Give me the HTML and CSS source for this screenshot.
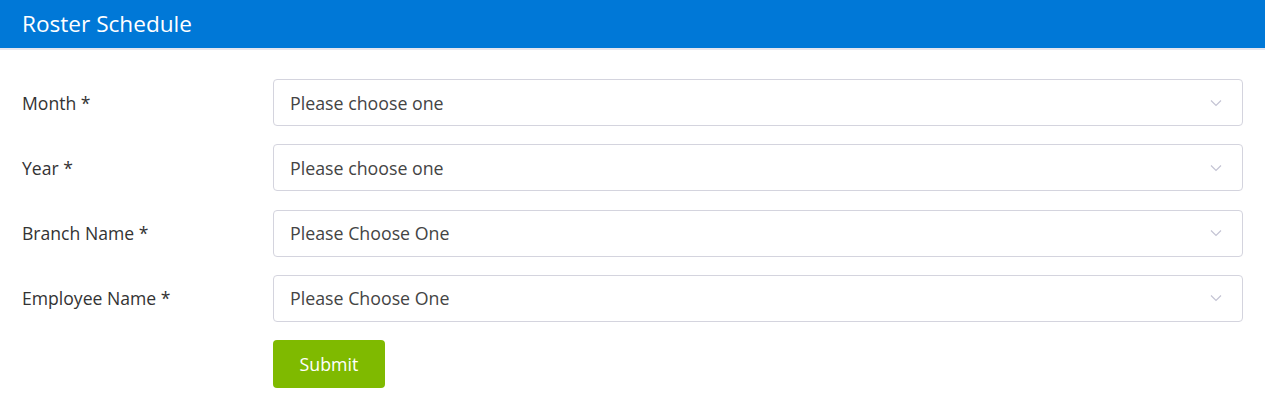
FILE: index.html
```html
<!DOCTYPE html>
<html>
<head>
<meta charset="utf-8">
<link rel="stylesheet" href="styles.css">
</head>
<body>
<header class="topbar"><h1 class="title">Roster Schedule</h1></header>
<form class="form">
  <div class="row">
    <label class="label">Month *</label>
    <div class="select"><span>Please choose one</span><svg class="chev" width="12" height="8" viewBox="0 0 12 8"><path d="M1 1.5 L6 6.5 L11 1.5" fill="none" stroke="#c4c4d4" stroke-width="1.2"/></svg></div>
  </div>
  <div class="row">
    <label class="label">Year *</label>
    <div class="select"><span>Please choose one</span><svg class="chev" width="12" height="8" viewBox="0 0 12 8"><path d="M1 1.5 L6 6.5 L11 1.5" fill="none" stroke="#c4c4d4" stroke-width="1.2"/></svg></div>
  </div>
  <div class="row">
    <label class="label">Branch Name *</label>
    <div class="select"><span>Please Choose One</span><svg class="chev" width="12" height="8" viewBox="0 0 12 8"><path d="M1 1.5 L6 6.5 L11 1.5" fill="none" stroke="#c4c4d4" stroke-width="1.2"/></svg></div>
  </div>
  <div class="row">
    <label class="label">Employee Name *</label>
    <div class="select"><span>Please Choose One</span><svg class="chev" width="12" height="8" viewBox="0 0 12 8"><path d="M1 1.5 L6 6.5 L11 1.5" fill="none" stroke="#c4c4d4" stroke-width="1.2"/></svg></div>
  </div>
  <div class="row">
    <span class="label"></span>
    <button type="button" class="submit">Submit</button>
  </div>
</form>
</body>
</html>
```
FILE: styles.css
```css
* { box-sizing: border-box; }
body {
  margin: 0;
  background: #fff;
  font-family: "Open Sans", "Noto Sans", sans-serif;
}
.topbar {
  height: 50px;
  background: #0078d7;
  border-bottom: 2px solid #e6e6ef;
  display: flex;
  align-items: center;
  padding: 0 22px 2px;
}
.title {
  margin: 0;
  font-size: 22.6px;
  font-weight: 400;
  color: #fff;
}
.form {
  padding: 29px 22px 0 22px;
  display: flex;
  flex-direction: column;
  gap: 18.3px;
}
.row {
  display: flex;
  align-items: center;
}
.label {
  width: 251px;
  flex: none;
  font-size: 17.6px;
  color: #333;
}
.select {
  flex: 1;
  height: 47px;
  border: 1px solid #d4d4de;
  border-radius: 4px;
  display: flex;
  align-items: center;
  justify-content: space-between;
  padding: 0 20px 0 16px;
  font-size: 17.8px;
  color: #444;
}
.chev { display: block; }
.submit {
  width: 112px;
  height: 48px;
  border: none;
  border-radius: 4px;
  background: #7fba00;
  color: #fff;
  font-family: "Open Sans", "Noto Sans", sans-serif;
  font-size: 17.8px;
}
```
